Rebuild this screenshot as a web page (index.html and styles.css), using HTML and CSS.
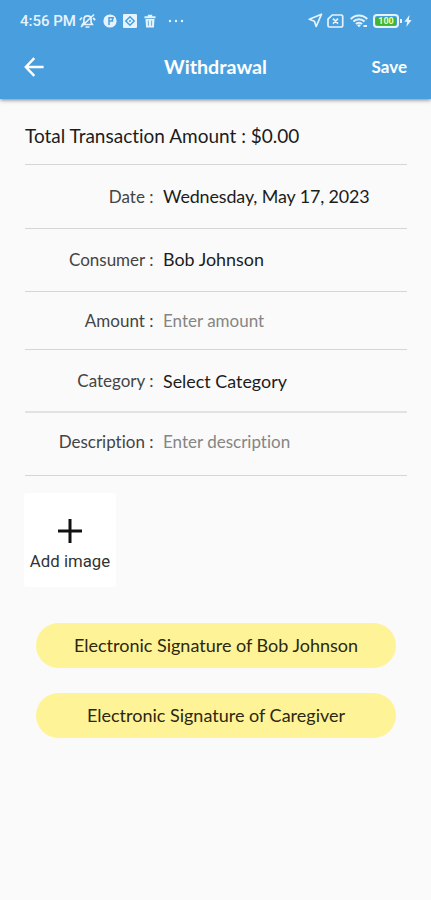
FILE: index.html
```html
<!DOCTYPE html>
<html lang="en">
<head>
<meta charset="utf-8">
<meta name="viewport" content="width=device-width, initial-scale=1">
<title>Withdrawal</title>
<link rel="stylesheet" href="styles.css">
</head>
<body>
<header class="header">
  <div class="status">
    <span class="time">4:56 PM</span>
    <svg class="bell" width="17" height="16" viewBox="0 0 17 16" fill="none" stroke="currentColor" stroke-width="1.700"><path d="M3.500 11.500h9.800l-1.200-2V6.300C12 4 10.500 2.800 8.500 2.800S5 4 4.900 6.300v3.200zM6.500 14h4M2 14 15 1.500M.8 7 3 4.500M14 5l2.200 2"/></svg>
    <svg class="disc" width="14" height="14" viewBox="0 0 14 14"><circle cx="7" cy="7" r="6.600" fill="currentColor"/><path d="M6 3v8M6 3.800h5M9.500 4v3H6" fill="none" stroke="#499fde" stroke-width="1.500"/></svg>
    <svg class="square" width="14" height="14" viewBox="0 0 14 14"><rect width="14" height="14" rx="1" fill="currentColor"/><path d="m7 2.800 4.200 4.200L7 11.200 2.800 7z" fill="none" stroke="#499fde" stroke-width="1.500"/><circle cx="7" cy="7" r="1" fill="#499fde"/></svg>
    <svg class="trash" width="12" height="14" viewBox="0 0 12 14"><path d="M.5 2.200h3.300V.8h4.400v1.400h3.300v2H.5zM1.500 5h9l-.6 8.500H2.100z" fill="currentColor"/><path d="M4.400 6.500v5.300M7.600 6.500v5.300" stroke="#499fde" stroke-width=".8"/></svg>
    <svg class="dots" width="16" height="4" viewBox="0 0 16 4" fill="currentColor"><circle cx="2" cy="2" r="1.200"/><circle cx="8" cy="2" r="1.200"/><circle cx="14" cy="2" r="1.200"/></svg>
    <svg class="nav" width="15" height="15" viewBox="0 0 15 15" fill="none" stroke="currentColor" stroke-width="1.700" stroke-linejoin="round"><path d="M13.500 1.200 1.300 6.300l5.100 1.900 1.800 5.300z"/></svg>
    <svg class="sim" width="17" height="14" viewBox="0 0 17 14" fill="none" stroke="currentColor" stroke-width="1.700"><path d="M5.200 1h9a1.500 1.500 0 0 1 1.500 1.500v9a1.500 1.500 0 0 1-1.500 1.500H2.500A1.500 1.500 0 0 1 1 11.500V5.200zM6 4.700l5 5M11 4.700l-5 5"/></svg>
    <svg class="wifi" width="18" height="14" viewBox="0 0 18 14" fill="none" stroke="currentColor" stroke-width="2.100"><path d="M.8 5c4.600-4.700 11.800-4.700 16.400 0M3.400 7.600c3.200-3.200 8-3.200 11.200 0M6 10.100c1.700-1.700 4.300-1.700 6 0"/><path d="m7 11.300 2-1 2 1-2 2z" fill="currentColor" stroke="none"/><path d="M13.500 12h3.500" stroke-width="2"/></svg>
    <span class="battery"><span class="charge">100</span></span>
    <svg class="bolt" width="8" height="12" viewBox="0 0 8 12" fill="currentColor"><path d="M5.500 0 .4 6.700h2.800L2.300 12l5.300-7H4.800z"/></svg>
  </div>
  <div class="toolbar">
    <svg width="20" height="20" viewBox="0 0 20 20" fill="none" stroke="currentColor" stroke-width="2.400"><path d="M19.600 10H2M10.300 1.200 1.800 10l8.500 8.800"/></svg>
    <h1 class="title">Withdrawal</h1>
    <span class="save">Save</span>
  </div>
</header>
<main class="content">
  <div class="total">Total Transaction Amount : $0.00</div>
  <div class="row date"><span class="label">Date :</span><span class="value">Wednesday, May 17, 2023</span></div>
  <div class="row consumer"><span class="label">Consumer :</span><span class="value">Bob Johnson</span></div>
  <div class="row amount"><span class="label">Amount :</span><span class="value hint">Enter amount</span></div>
  <div class="row category"><span class="label">Category :</span><span class="value">Select Category</span></div>
  <div class="row description"><span class="label">Description :</span><span class="value hint">Enter description</span></div>
  <div class="add">
    <svg width="26" height="26" viewBox="0 0 26 26" stroke="#111" stroke-width="3"><path d="M13 1v24M1 13h24"/></svg>
    <span class="add-label">Add image</span>
  </div>
  <div class="sign"><span>Electronic Signature of Bob Johnson</span></div>
  <div class="sign"><span>Electronic Signature of Caregiver</span></div>
</main>
</body>
</html>
```
FILE: styles.css
```css
* { box-sizing: border-box; }
body {
  margin: 0;
  height: 900px;
  overflow: hidden;
  background: #fafafa;
  color: #1c1c1c;
  font-family: Lato, sans-serif;
  font-size: 18px;
  font-variant-ligatures: none;
}
svg { display: block; flex: none; }
.header {
  height: 99px;
  background: #499fde;
  color: #fff;
  box-shadow: 0 1px 4px rgba(0, 0, 0, .5);
}
.status {
  height: 41px;
  padding-left: 20px;
  display: flex;
  align-items: center;
  color: #e6f3fd;
}
.time {
  width: 59px;
  font: 500 15px/20px Roboto, sans-serif;
  white-space: nowrap;
}
.disc { margin-left: 7px; }
.square { margin-left: 6px; }
.trash { margin-left: 7px; }
.dots { margin-left: 12px; }
.nav { margin-left: 124px; }
.sim { margin-left: 4px; }
.wifi { margin-left: 6px; }
.battery {
  position: relative;
  width: 26px;
  height: 14px;
  margin-left: 5px;
  padding: 1px;
  border: 2px solid #e6f3fd;
  border-radius: 4px;
}
.battery::after {
  content: "";
  position: absolute;
  right: -5px;
  top: 3px;
  width: 2px;
  height: 4px;
  background: #e6f3fd;
}
.charge {
  display: block;
  height: 8px;
  border-radius: 1px;
  background: #43b52c;
  color: #e5ffc9;
  font: 700 9px/8px Roboto, sans-serif;
  text-align: center;
}
.bolt { margin-left: 5px; }
.toolbar {
  height: 52px;
  padding: 0 24px;
  display: grid;
  grid-template-columns: 60px 1fr 60px;
  align-items: center;
}
.title {
  margin: 0;
  padding-bottom: 2px;
  text-align: center;
  font-size: 19.700px;
  font-weight: 700;
}
.save {
  justify-self: end;
  padding-bottom: 2px;
  font-size: 17px;
  font-weight: 700;
}
.content {
  padding: 0 24px 0 25px;
  display: flex;
  flex-direction: column;
}
.total, .row {
  border-bottom: 1px solid #d5d5d5;
  white-space: nowrap;
}
.total {
  height: 66px;
  padding-top: 25px;
  font-size: 19px;
  line-height: 24px;
}
.row {
  display: grid;
  grid-template-columns: 128.500px 1fr;
  column-gap: 9.500px;
  align-items: center;
}
.label { text-align: right; color: #444; font-size: 17px; }
.value { font-size: 17.900px; }
.value.hint { color: #858585; font-size: 17px; }
.date { height: 64px; padding-bottom: 1px; }
.date .value { letter-spacing: -.12px; }
.consumer { height: 63px; padding-bottom: 2px; }
.amount { height: 58px; }
.category { height: 63px; border-bottom: 2px solid #e2e2e2; }
.description { height: 63px; padding-bottom: 6px; }
.add {
  width: 92px;
  height: 94px;
  margin: 17px 0 36px -1px;
  padding-top: 25px;
  display: flex;
  flex-direction: column;
  align-items: center;
  border-radius: 3px;
  background: #fff;
}
.add-label {
  margin-top: 7px;
  font: 400 16.800px/20px Roboto, sans-serif;
  color: #333;
  white-space: nowrap;
}
.sign {
  width: 360px;
  height: 45px;
  margin: 0 0 25px 11px;
  padding-bottom: 1px;
  display: flex;
  align-items: center;
  justify-content: center;
  border-radius: 23px;
  background: #fff397;
  color: #2b2810;
  white-space: nowrap;
}
```
